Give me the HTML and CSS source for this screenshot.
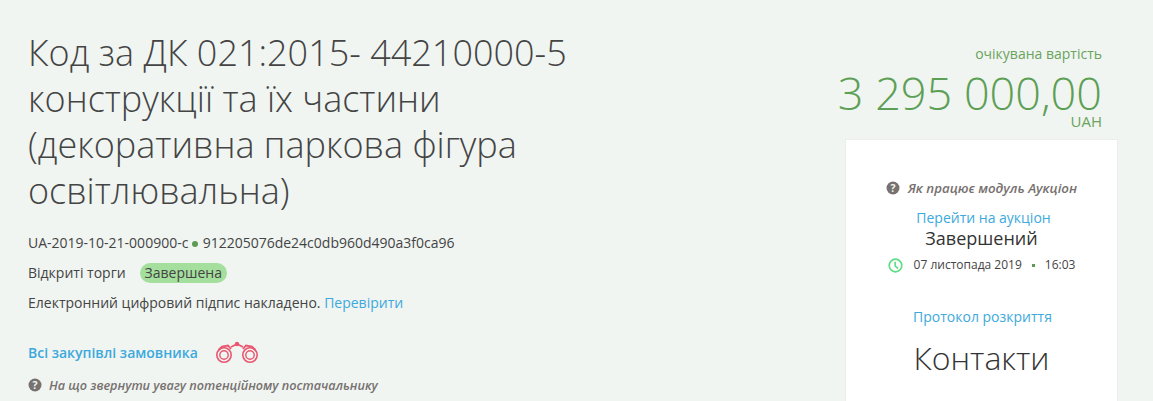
FILE: index.html
```html
<!DOCTYPE html>
<html lang="uk">
<head>
<meta charset="utf-8">
<title>Тендер</title>
<link rel="stylesheet" href="styles.css">
</head>
<body>
<div class="page">
  <main class="main">
    <h1 class="title">Код за ДК 021:2015- 44210000-5 конструкції та їх частини (декоративна паркова фігура освітлювальна)</h1>
    <div class="row ids">UA-2019-10-21-000900-c <span class="dot"></span> 912205076de24c0db960d490a3f0ca96</div>
    <div class="row status-row"><span>Відкриті торги</span><span class="badge">Завершена</span></div>
    <div class="row sign">Електронний цифровий підпис накладено. <a class="link" href="#">Перевірити</a></div>
    <div class="buyer"><a class="link strong" href="#">Всі закупівлі замовника</a>
      <svg class="bino" width="42" height="24" viewBox="0 0 42 24" fill="none" stroke="#e8566f">
        <circle cx="8" cy="15" r="7.2" stroke-width="1.6"/>
        <circle cx="8" cy="15" r="4.2" stroke-width="1.4"/>
        <circle cx="34" cy="15" r="7.2" stroke-width="1.6"/>
        <circle cx="34" cy="15" r="4.2" stroke-width="1.4"/>
        <path d="M2.5 10 L6 6.5 L12 5.5 L15 9 M15 7 L21 4 L27 7 M27 9 L30 5.5 L36 6.5 L39.5 10" stroke-width="1.8"/>
        <circle cx="21" cy="4" r="2.2" fill="#e8566f" stroke="none"/>
      </svg>
    </div>
    <div class="hint main-hint">
      <svg class="q" width="14" height="14" viewBox="0 0 14 14"><circle cx="7" cy="7" r="6.5" fill="#77716f"/><text x="7" y="10.6" class="qt">?</text></svg>
      <em>На що звернути увагу потенційному постачальнику</em>
    </div>
  </main>
  <aside class="side">
    <div class="label">очікувана вартість</div>
    <div class="amount">3 295 000,00</div>
    <div class="cur">UAH</div>
    <div class="card">
      <div class="hint card-hint">
        <svg class="q" width="14" height="14" viewBox="0 0 14 14"><circle cx="7" cy="7" r="6.5" fill="#77716f"/><text x="7" y="10.6" class="qt">?</text></svg>
        <em>Як працює модуль Аукціон</em>
      </div>
      <a class="link go" href="#">Перейти на аукціон</a>
      <div class="done">Завершений</div>
      <div class="when">
        <svg class="clock" width="15" height="15" viewBox="0 0 15 15" fill="none" stroke="#5fdc86" stroke-width="1.7"><circle cx="7.5" cy="7.5" r="6.3"/><path d="M7.2 3.8V8L10 10.6"/></svg>
        <span class="date">07 листопада 2019</span><span class="sq"></span><span>16:03</span>
      </div>
      <a class="link proto" href="#">Протокол розкриття</a>
      <div class="contacts">Контакти</div>
    </div>
  </aside>
</div>
</body>
</html>
```
FILE: styles.css
```css
html, body { margin: 0; height: 401px; overflow: hidden; }
body { background: #f0f5f2; color: #444; font-family: "Open Sans", sans-serif; font-size: 14px; }
.page { display: flex; justify-content: space-between; padding: 30px 36px 0 28px; height: 371px; overflow: hidden; }
.main { width: 560px; }
.title { margin: 0 0 19px; font-size: 36px; line-height: 46px; font-weight: 300; color: #444; }
.row { line-height: 20px; font-size: 14px; }
.ids { margin-bottom: 10px; }
.dot { display: inline-block; width: 6px; height: 6px; border-radius: 50%; background: #5c9a55; margin: 0 1px 0 0; vertical-align: 1px; }
.status-row { display: flex; align-items: center; gap: 14px; margin-bottom: 10px; }
.badge { background: #a5df9d; border-radius: 10px; padding: 0 5px; line-height: 20px; }
.link { color: #3da9dc; text-decoration: none; }
.strong { font-weight: 600; }
.buyer { display: flex; align-items: center; gap: 18px; margin-top: 28px; height: 22px; }
.hint { display: flex; align-items: center; gap: 8px; color: #77716f; font-weight: 600; font-size: 13.3px; height: 20px; }
.main-hint { font-size: 12.65px; gap: 7px; margin-top: 12px; }
.q { flex: none; }
.qt { fill: #f0f5f2; font: 700 10.5px "Open Sans", sans-serif; text-anchor: middle; }
.side { width: 271px; display: flex; flex-direction: column; align-items: flex-end; }
.label { color: #6ba35c; font-size: 14px; line-height: 20px; margin: 14px 15px 0 0; }
.amount { color: #5d9f55; font-size: 45px; font-weight: 300; line-height: 38px; margin: 10px 15px 0 0; white-space: nowrap; }
.cur { color: #6ba35c; font-size: 15px; line-height: 18px; margin: 0 15px 0 0; }
.card { box-sizing: border-box; width: 271px; height: 300px; margin-top: 10px; background: #fff; box-shadow: 0 0 0 1px #eceeed; display: flex; flex-direction: column; align-items: center; padding-top: 38px; flex: none; }
.card-hint { margin: 0 0 10px; }
.go { font-size: 14px; line-height: 20px; margin-left: 4px; }
.done { font-size: 18px; line-height: 22px; color: #333; margin-top: -1px; }
.when { display: flex; align-items: center; font-size: 12px; line-height: 20px; margin-top: 6px; color: #444; }
.clock { margin-right: 11px; }
.sq { width: 3px; height: 3px; background: #5c9a55; margin: 0 10px; }
.proto { font-size: 14px; line-height: 20px; margin-top: 32px; margin-left: 2px; }
.contacts { font-size: 32px; font-weight: 300; line-height: 46px; margin-top: 8px; color: #333; }
```
